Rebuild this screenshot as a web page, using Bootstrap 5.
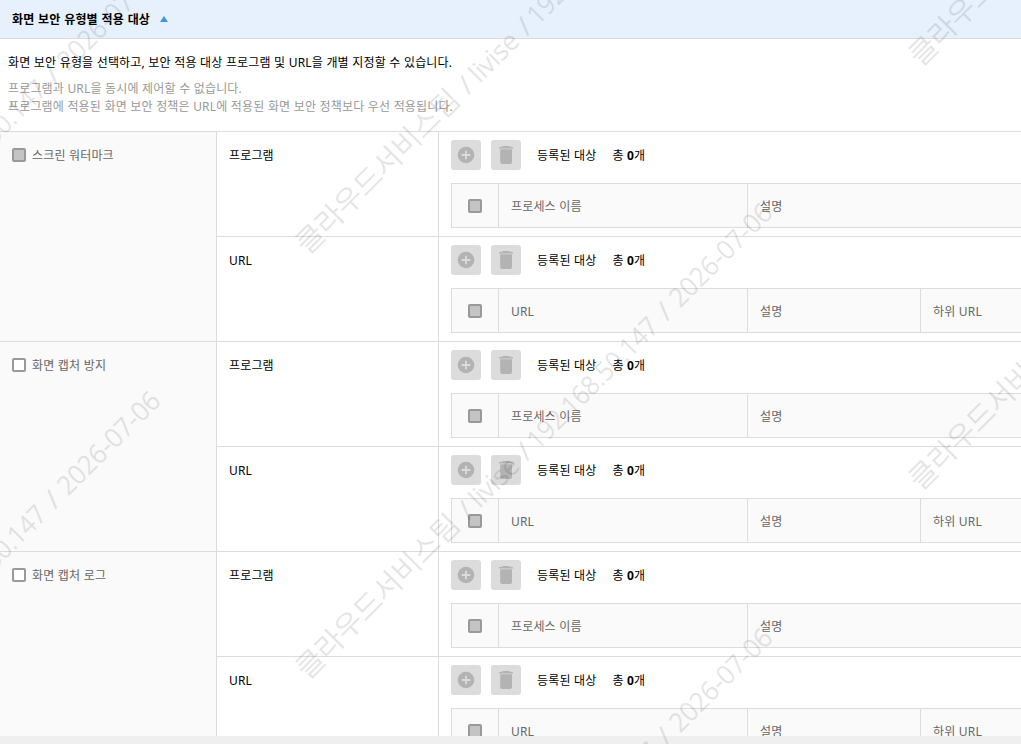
<!DOCTYPE html>
<html lang="ko">
<head>
<meta charset="utf-8">
<meta name="viewport" content="width=device-width, initial-scale=1">
<title>화면 보안 유형별 적용 대상</title>
<link href="https://cdn.jsdelivr.net/npm/bootstrap@5.3.0/dist/css/bootstrap.min.css" rel="stylesheet">
<style>
:root{--line:#dcdcdc}
body{font:12px/18px "Noto Sans","Noto Sans CJK KR",sans-serif;color:#000;letter-spacing:.15px;word-spacing:.2px;height:744px;width:1021px}
.pane{height:736px}
.bar{height:8px;background:#efefef}
.sec-head{height:39px;background:#e6f1fd;border-bottom:1px solid #dadade;padding:2px 0 0 12px}
.sec-head h1{font-size:12px;line-height:18px;letter-spacing:.14px;word-spacing:.5px}
.tri{border:4.5px solid transparent;border-top:0;border-bottom:6px solid #3e97e0;margin:-2px 0 0 10px}
.intro{height:92px;padding:15px 8px 0}
.muted{color:#999;margin-top:8px}
.group{height:210px;border-top:1px solid var(--line)}
.kind{width:217px;background:#fafafa;border-right:1px solid var(--line);padding:15px 12px;color:#666}
.kind .box{margin-top:-2px}
.item{height:105px}
.item+.item{border-top:1px solid var(--line);margin-top:-1px;height:106px}
.name{width:222px;border-right:1px solid var(--line);padding:15px 12px}
.work{padding:8px 0 0 12px}
.tool{width:30px;height:30px;background:#dcdcdc;border-radius:3px;border:0}
.tool+.tool{margin-left:10px}
.label{padding-top:2px;margin-left:16px}
.box{width:14px;height:14px;border:2px solid #999;border-radius:2px;background:#fff;flex:none}
.box.off{background:#c4c4c4}
.heads{height:45px;margin-top:13px;border:1px solid var(--line);border-right:0;background:#fafafa;color:#666;width:690px}
.heads>div{padding:2px 0 0 12px;border-right:1px solid var(--line);display:flex;align-items:center;flex:none}
.heads>.c0{width:47px;padding:0;justify-content:center}
.c1{width:249px}.c2{width:173px}.c3{width:220px}.wide{width:393px}
.wm{left:0;top:0;pointer-events:none;font-family:"Noto Sans","Noto Sans CJK KR",sans-serif;font-weight:300;letter-spacing:0;word-spacing:0;opacity:.105}
</style>
</head>
<body class="position-relative overflow-hidden">
<svg width="0" height="0" class="position-absolute"><defs>
<symbol id="plus" viewBox="0 0 30 30"><circle cx="15" cy="15" r="8.3" fill="#b3b3b3"/><path d="M15 10.7v8.6M10.7 15h8.6" stroke="#dcdcdc" stroke-width="1.8"/></symbol>
<symbol id="trash" viewBox="0 0 30 30"><path d="M8 8.6V7.2Q11.5 6.8 12.3 6h5.4Q18.5 6.8 22 7.2v1.4zM9.2 9.3h11.8V22a2 2 0 0 1-2 2h-7.8a2 2 0 0 1-2-2z" fill="#b3b3b3"/></symbol>
</defs></svg>
<main class="pane overflow-hidden">
  <header class="sec-head d-flex align-items-center"><h1 class="m-0 fw-bold">화면 보안 유형별 적용 대상</h1><span class="tri"></span></header>
  <section class="intro">
    <p class="m-0">화면 보안 유형을 선택하고, 보안 적용 대상 프로그램 및 URL을 개별 지정할 수 있습니다.</p>
    <p class="muted mb-0">프로그램과 URL을 동시에 제어할 수 없습니다.<br>프로그램에 적용된 화면 보안 정책은 URL에 적용된 화면 보안 정책보다 우선 적용됩니다.</p>
  </section>
  <div id="groups"></div>
</main>
<div class="bar"></div>
<svg class="wm position-absolute" id="wm" width="1021" height="744" fill="#000" stroke="#000" stroke-width=".45"></svg>
<script src="https://cdn.jsdelivr.net/npm/bootstrap@5.3.0/dist/js/bootstrap.bundle.min.js"></script>
<script>
const item = url => `<div class="item d-flex">
  <div class="name flex-shrink-0">${url ? 'URL' : '프로그램'}</div>
  <div class="work">
    <div class="d-flex align-items-center">
      <button class="tool p-0 d-flex" disabled aria-label="추가"><svg width="30" height="30"><use href="#plus"/></svg></button>
      <button class="tool p-0 d-flex" disabled aria-label="삭제"><svg width="30" height="30"><use href="#trash"/></svg></button>
      <span class="label">등록된 대상</span><span class="label">총 <b>0</b>개</span>
    </div>
    <div class="heads d-flex"><div class="c0"><span class="box off"></span></div>
      <div class="c1">${url ? 'URL' : '프로세스 이름'}</div>
      ${url ? '<div class="c2">설명</div><div class="c3">하위 URL</div>' : '<div class="wide">설명</div>'}</div>
  </div></div>`;
document.getElementById('groups').innerHTML = [['스크린 워터마크',' off'],['화면 캡처 방지',''],['화면 캡처 로그','']].map(([t,c]) =>
  `<section class="group d-flex"><div class="kind flex-shrink-0"><div class="d-flex align-items-center"><span class="box${c}"></span><span style="margin-left:6px">${t}</span></div></div><div>${item(false)}${item(true)}</div></section>`).join('');
// Diagonal watermark: [text, offset along the line, width, font size]
const parts = [['클라우드서비스팀',0,218,29],['/',227,10,26],['livise',243,58,26],['/',310,10,26],['192.168.50.147',325,173,26],['/',508,10,26],['2026-07-06',526,133,26]];
const starts = [[308,255.5],[308,680.5],[308,1105.5],[-304,443.5],[-304,868.5],[921,67.5],[921,491.5]];
document.getElementById('wm').innerHTML = starts.map(([x,y]) =>
  `<g transform="translate(${x} ${y}) rotate(-45)">${parts.map(([t,u,w,s]) =>
    `<text x="${u}" textLength="${w}" lengthAdjust="spacingAndGlyphs" font-size="${s}">${t}</text>`).join('')}</g>`).join('');
</script>
</body>
</html>
